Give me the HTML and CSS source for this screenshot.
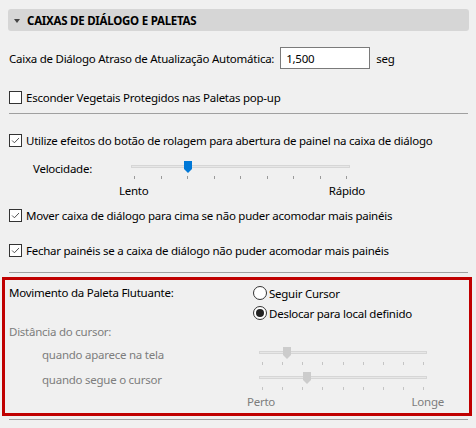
FILE: index.html
```html
<!DOCTYPE html>
<html lang="pt">
<head>
  <meta charset="UTF-8" />
  <title>Caixas de Diálogo e Paletas</title>
  <link rel="stylesheet" href="styles.css">
</head>
<body>
  <div class="panel">
    <div class="section-head"><span class="caret"></span>CAIXAS DE DIÁLOGO E PALETAS</div>

    <div class="field-row">
      <span>Caixa de Diálogo Atraso de Atualização Automática:</span>
      <input class="num" type="text" value="1,500">
      <span class="unit">seg</span>
    </div>

    <label class="check-row row-hide"><span class="box"></span>Esconder Vegetais Protegidos nas Paletas pop-up</label>
    <div class="sep sep-1"></div>

    <label class="check-row row-scroll"><span class="box on"><svg viewBox="0 0 13 13"><path d="M2.5 6.5 L5.2 9.2 L10.6 3.6" /></svg></span>Utilize efeitos do botão de rolagem para abertura de painel na caixa de diálogo</label>

    <div class="speed-row">
      <span class="speed-label">Velocidade:</span>
      <div class="slider wide">
        <div class="track"></div>
        <svg class="thumb blue" style="left: 53px" viewBox="0 0 8 12"><path d="M0 0 H8 V8 L4 12 L0 8 Z" /></svg>
        <div class="ticks"><i></i><i></i><i></i><i></i><i></i><i></i><i></i><i></i><i></i></div>
      </div>
    </div>
    <div class="ends ends-speed"><span>Lento</span><span>Rápido</span></div>

    <label class="check-row row-move"><span class="box on"><svg viewBox="0 0 13 13"><path d="M2.5 6.5 L5.2 9.2 L10.6 3.6" /></svg></span>Mover caixa de diálogo para cima se não puder acomodar mais painéis</label>
    <label class="check-row row-close"><span class="box on"><svg viewBox="0 0 13 13"><path d="M2.5 6.5 L5.2 9.2 L10.6 3.6" /></svg></span>Fechar painéis se a caixa de diálogo não puder acomodar mais painéis</label>
    <div class="sep sep-2"></div>

    <div class="palette-box">
      <div class="move-grid">
        <span class="move-label">Movimento da Paleta Flutuante:</span>
        <div class="radios">
          <label class="radio-row"><span class="radio"></span>Seguir Cursor</label>
          <label class="radio-row"><span class="radio on"></span>Deslocar para local definido</label>
        </div>
      </div>

      <div class="muted dist-label">Distância do cursor:</div>

      <div class="dist-row first">
        <span class="muted dist-name">quando aparece na tela</span>
        <div class="slider narrow">
          <div class="track"></div>
          <svg class="thumb gray" style="left: 24px" viewBox="0 0 8 12"><path d="M0 0 H8 V8 L4 12 L0 8 Z" /></svg>
          <div class="ticks"><i></i><i></i><i></i><i></i><i></i><i></i><i></i><i></i><i></i></div>
        </div>
      </div>
      <div class="dist-row second">
        <span class="muted dist-name">quando segue o cursor</span>
        <div class="slider narrow">
          <div class="track"></div>
          <svg class="thumb gray" style="left: 44px" viewBox="0 0 8 12"><path d="M0 0 H8 V8 L4 12 L0 8 Z" /></svg>
          <div class="ticks"><i></i><i></i><i></i><i></i><i></i><i></i><i></i><i></i><i></i></div>
        </div>
      </div>
      <div class="muted ends ends-dist"><span>Perto</span><span>Longe</span></div>
    </div>

    <div class="sep sep-3"></div>
  </div>
</body>
</html>
```

FILE: styles.css
```css
body { margin: 0; background: #f0f0f0; font-family: "Noto Sans", "Open Sans", sans-serif; font-size: 11.5px; letter-spacing: -0.25px; color: #000; }
.panel { width: 476px; height: 428px; overflow: hidden; }

/* section header */
.section-head { margin: 9px 7px 0 8px; height: 22px; background: #d6d6d6; border-radius: 3px; display: flex; align-items: center; font-weight: bold; }
.caret { width: 0; height: 0; border-left: 3.5px solid transparent; border-right: 3.5px solid transparent; border-top: 4px solid #444; margin: 1px 7px 0 6px; }

/* numeric field */
.field-row { display: flex; align-items: center; height: 22px; margin: 16px 0 0 9px; }
.num { width: 90px; height: 22px; box-sizing: border-box; border: 1px solid #7a7a7a; background: #fff; font: inherit; letter-spacing: inherit; padding: 0 5px; margin: 0 6px 0 6px; outline: none; }

/* checkboxes */
.check-row { display: flex; align-items: center; height: 16px; margin-left: 9px; }
.box { width: 13px; height: 13px; box-sizing: border-box; border: 1px solid #333; background: #fff; margin-right: 4px; flex: none; display: flex; }
.box svg { width: 11px; height: 11px; }
.box path { fill: none; stroke: #444; stroke-width: 1.1; }
.row-hide { margin-top: 20px; }
.row-scroll { margin-top: 18px; }
.row-move { margin-top: 8px; }
.row-close { margin-top: 19px; }

.sep { height: 1px; background: #a0a0a0; margin-left: 9px; width: 459px; }
.sep-1 { margin-top: 8px; }
.sep-2 { margin-top: 14px; }
.sep-3 { margin-top: 3px; }

/* sliders */
.slider { position: relative; height: 18px; flex: none; }
.slider.wide { width: 219px; }
.slider.narrow { width: 168px; }
.track { position: absolute; left: 0; right: 0; top: 4px; height: 3px; box-sizing: border-box; background: #e7e7e7; border: 1px solid #d6d6d6; }
.thumb { position: absolute; top: 0; width: 8px; height: 12px; }
.thumb.blue path { fill: #0078d7; }
.thumb.gray path { fill: #cccccc; }
.ticks { position: absolute; left: 3px; right: 3px; top: 15px; display: flex; justify-content: space-between; }
.ticks i { width: 1px; height: 3px; background: #9a9a9a; }
.narrow .ticks i { background: #c4c4c4; }

.speed-row { display: flex; margin: 13px 0 0 33px; height: 18px; line-height: 16px; }
.speed-label { width: 98px; }

.ends { display: flex; justify-content: space-between; height: 16px; line-height: 16px; }
.ends-speed { margin: 4px 0 0 119px; width: 246px; }

/* floating palette box */
.palette-box { margin: 4px 0 0 2px; width: 470px; height: 139px; box-sizing: border-box; border: 3px solid #c00000; padding-left: 4px; }
.move-grid { display: flex; margin-top: 5px; }
.move-label { width: 244px; line-height: 16px; }
.radios { display: flex; flex-direction: column; gap: 4px; }
.radio-row { display: flex; align-items: center; height: 16px; }
.radio { width: 14px; height: 14px; box-sizing: border-box; border: 1px solid #333; border-radius: 50%; background: #fff; margin-right: 2px; display: flex; align-items: center; justify-content: center; }
.radio.on::after { content: ""; width: 8px; height: 8px; border-radius: 50%; background: #222; }

.muted { color: #7d7d7d; }
.dist-label { margin-top: 3px; line-height: 16px; }
.dist-row { display: flex; height: 18px; line-height: 16px; margin-left: 33px; }
.dist-row.first { margin-top: 7px; }
.dist-row.second { margin-top: 7px; }
.dist-name { width: 217px; }
.ends-dist { margin: 4px 0 0 238px; width: 197px; }
```
